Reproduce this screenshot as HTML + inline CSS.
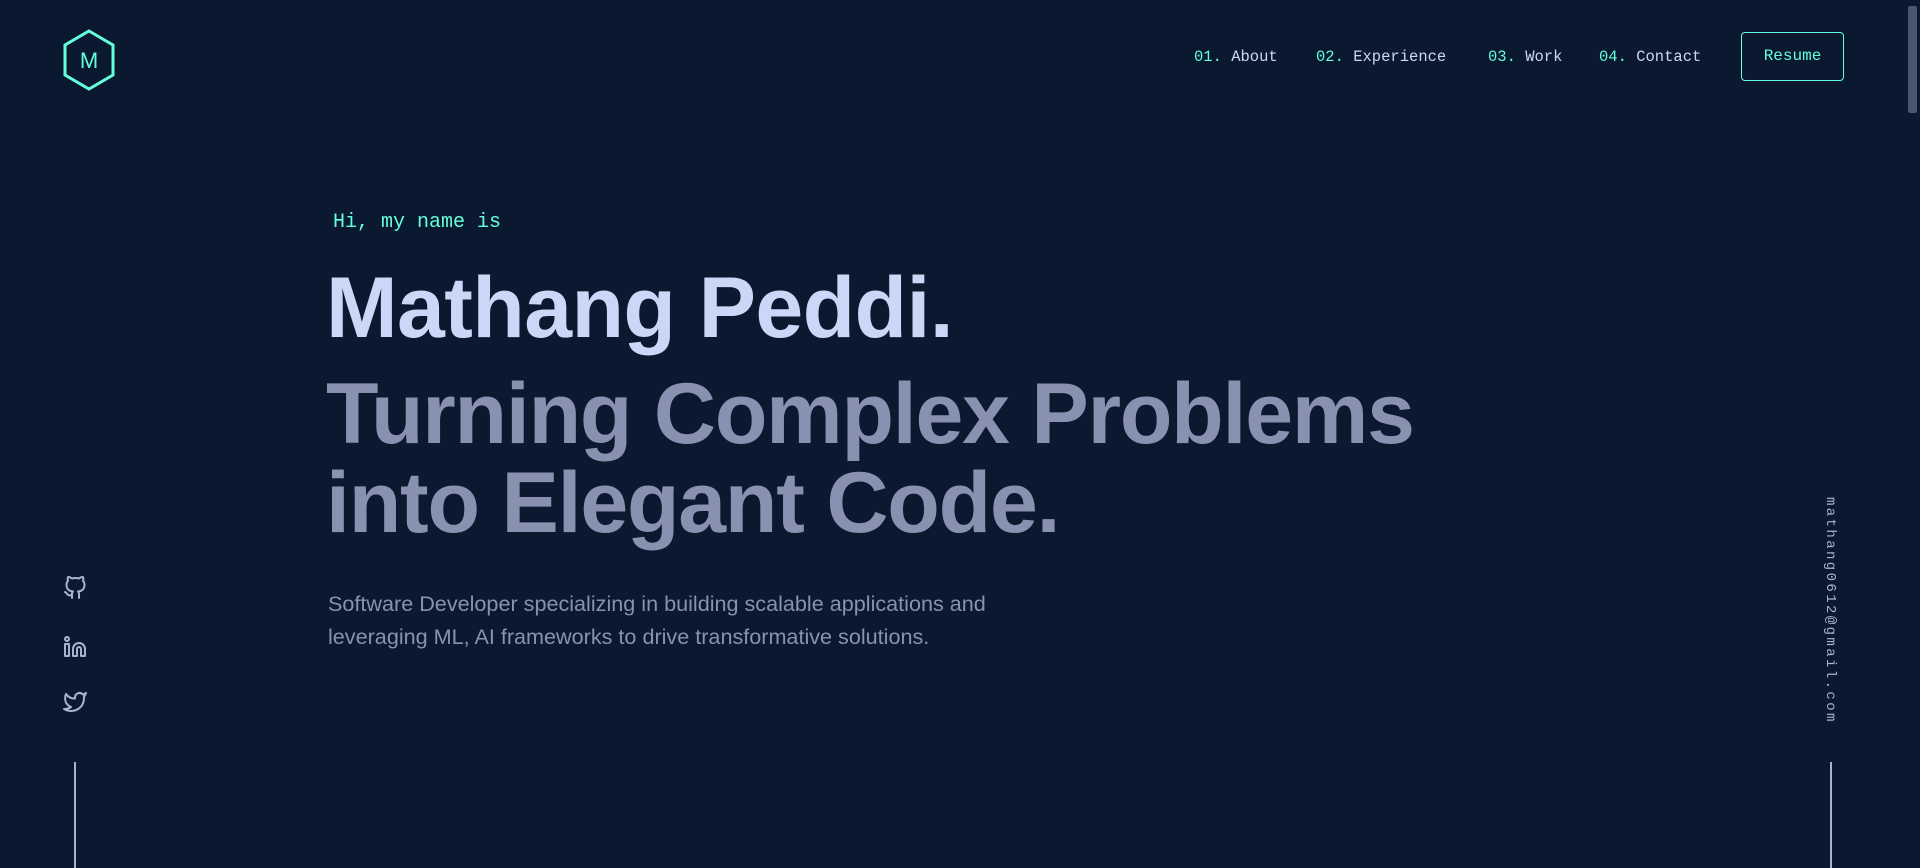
<!DOCTYPE html>
<html><head><meta charset="utf-8"><style>
*{margin:0;padding:0;box-sizing:border-box}
html,body{width:1920px;height:868px;overflow:hidden;background:#0a192f}
body{position:relative;font-family:"Liberation Sans",sans-serif}
.mono{font-family:"Liberation Mono",monospace}
.nav{position:absolute;top:48px;font-size:15.5px;color:#ccd6f6}
.nav span{color:#64ffda}
.resume{position:absolute;left:1741px;top:32px;width:103px;height:49px;border:1px solid #64ffda;border-radius:4px;color:#64ffda;font-size:16px;text-align:center;line-height:47px}
h1,h2{position:absolute;left:326px;font-size:86px;font-weight:bold;white-space:nowrap}
h1{color:#ccd6f6;letter-spacing:-0.6px;top:259px}
h2{color:#8892b0;letter-spacing:-1.2px;line-height:89px}
p{position:absolute;left:328px;top:587px;font-size:21.6px;line-height:33px;color:#8892b0;white-space:nowrap}
.line{position:absolute;width:2px;background:#a8b2d1;top:762px;height:106px}
.ico{position:absolute;left:63px;width:24px;height:24px}
</style></head><body>
<svg style="position:absolute;left:62px;top:29px" width="54" height="62" viewBox="0 0 54 62"><polygon points="27,2 51,16 51,46 27,60 3,46 3,16" fill="none" stroke="#64ffda" stroke-width="3"/><text x="27" y="39" fill="#64ffda" font-family="Liberation Sans" font-size="22" text-anchor="middle">M</text></svg>
<div class="nav mono" style="left:1194px"><span>01.</span> About</div>
<div class="nav mono" style="left:1316px"><span>02.</span> Experience</div>
<div class="nav mono" style="left:1488px"><span>03.</span> Work</div>
<div class="nav mono" style="left:1599px"><span>04.</span> Contact</div>
<div class="resume mono">Resume</div>
<div style="position:absolute;left:1908px;top:6px;width:9px;height:107px;background:#4a5670;border-radius:2px"></div>
<div class="mono" style="position:absolute;left:333px;top:211px;font-size:20px;color:#64ffda">Hi, my name is</div>
<h1>Mathang Peddi.</h1>
<h2 style="top:370px">Turning Complex Problems</h2>
<h2 style="top:459px">into Elegant Code.</h2>
<p>Software Developer specializing in building scalable applications and<br>leveraging ML, AI frameworks to drive transformative solutions.</p>
<svg class="ico" style="top:576px" viewBox="0 0 24 24" fill="none" stroke="#a8b2d1" stroke-width="2" stroke-linecap="round" stroke-linejoin="round"><path d="M9 19c-5 1.5-5-2.5-7-3m14 6v-3.87a3.37 3.37 0 0 0-.94-2.610c3.14-.35 6.44-1.54 6.44-7A5.44 5.440 0 0 0 20 4.77 5.07 5.07 0 0 0 19.91 1S18.73.65 16 2.48a13.38 13.38 0 0 0-7 0C6.27.65 5.09 1 5.09 1A5.07 5.07 0 0 0 5 4.77a5.44 5.44 0 0 0-1.5 3.78c0 5.42 3.3 6.61 6.44 7A3.37 3.37 0 0 0 9 18.13V22"/></svg>
<svg class="ico" style="top:635px" viewBox="0 0 24 24" fill="none" stroke="#a8b2d1" stroke-width="2" stroke-linecap="round" stroke-linejoin="round"><path d="M16 8a6 6 0 0 1 6 6v7h-4v-7a2 2 0 0 0-4 0v7h-4v-7a6 6 0 0 1 6-6z"/><rect x="2" y="9" width="4" height="12"/><circle cx="4" cy="4" r="2"/></svg>
<svg class="ico" style="top:690px" viewBox="0 0 24 24" fill="none" stroke="#a8b2d1" stroke-width="2" stroke-linecap="round" stroke-linejoin="round"><path d="M23 3a10.9 10.9 0 0 1-3.14 1.53 4.48 4.48 0 0 0-7.86 3v1A10.66 10.66 0 0 1 3 4s-4 9 5 13a11.64 11.64 0 0 1-7 2c9 5 20 0 20-11.5a4.5 4.5 0 0 0-.08-.83A7.72 7.72 0 0 0 23 3z"/></svg>
<div class="line" style="left:74px"></div>
<div class="mono" style="position:absolute;left:1822px;top:497px;writing-mode:vertical-rl;font-size:14px;letter-spacing:2.4px;color:#a8b2d1">mathang0612@gmail.com</div>
<div class="line" style="left:1830px"></div>
</body></html>
